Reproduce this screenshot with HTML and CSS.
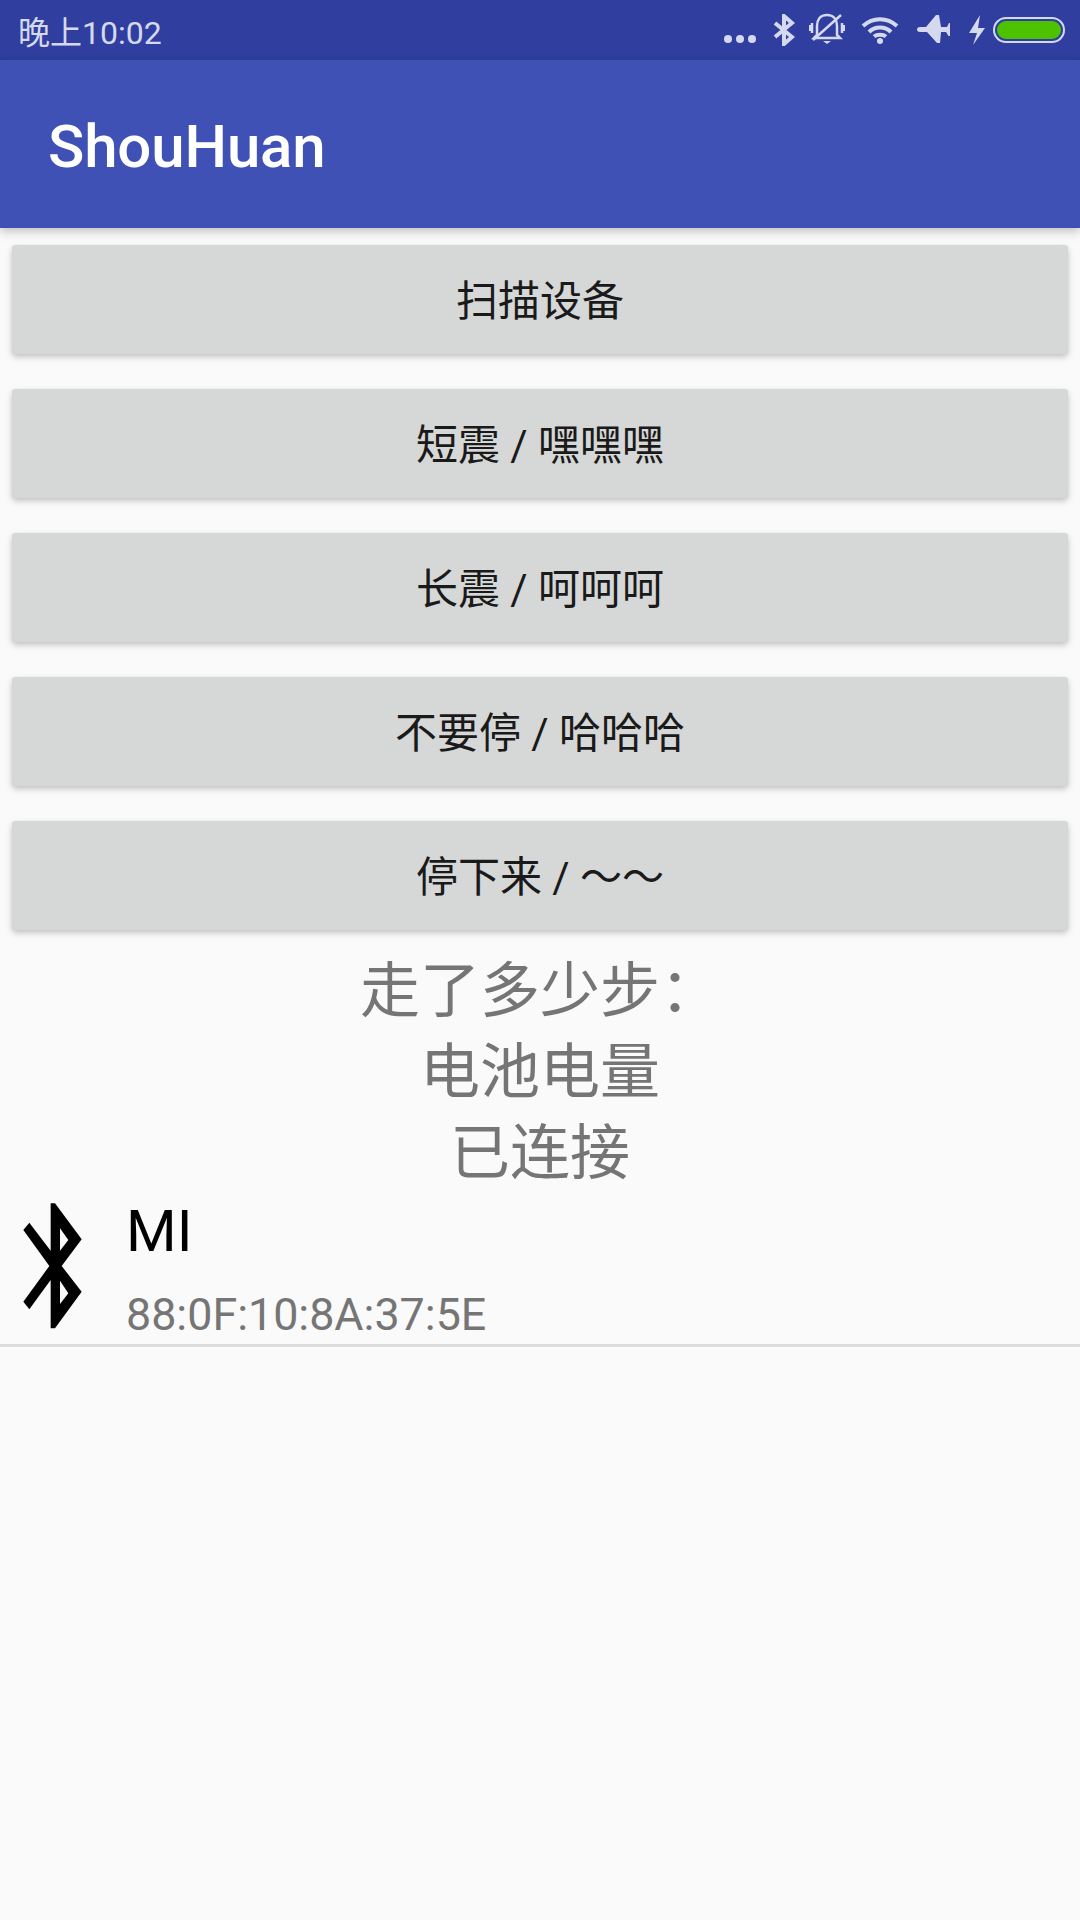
FILE: index.html
```html
<!DOCTYPE html>
<html>
<head>
  <title>ShouHuan</title>
  <link rel="stylesheet" href="styles.css">
</head>
<body>
  <div class="status-bar">
    <span class="time">晚上10:02</span>
    <div class="status-icons">
      <svg class="ic-dots" viewBox="0 0 34 10"><circle cx="5" cy="5" r="4"/><circle cx="17" cy="5" r="4"/><circle cx="29" cy="5" r="4"/></svg>
      <svg class="ic-bt" viewBox="0 0 22 32"><path class="line" d="M2 9 L19 23 L11 30 V2 L19 9 L2 23"/></svg>
      <svg class="ic-bell" viewBox="0 0 36 34">
        <path d="M18 2 C11 2 8 7 8 13 V22 L5 25 H31 L28 22 V13 C28 7 25 2 18 2 Z" class="thin"/>
        <path d="M14 28 H22 L18 31 Z"/>
        <path d="M3 10 V20 M0.8 12 V18 M33 10 V20 M35.2 12 V18" class="thin"/>
        <path d="M4 27 L32 2" class="thin"/>
      </svg>
      <svg class="ic-wifi" viewBox="0 0 38 28">
        <path class="wifi" d="M2 10 C12 1 26 1 36 10 M8 16 C14 10 24 10 30 16 M13 20.500 C16 18 22 18 25 20.500"/>
        <circle cx="19" cy="25" r="3"/>
      </svg>
      <svg class="ic-plane" viewBox="0 0 34 30"><path d="M0 14.500 C0 13 1 12 3 12 H9 L19 0 H22 L24 12 H30 L32 8 H33 V21 H31.500 L29 17 H24 L23 28 H20 L10 17 H3 C1 17 0 16 0 14.500 Z"/></svg>
      <svg class="ic-bolt" viewBox="0 0 17 30"><path d="M12 0 L1 18 H9 L5 30 L17 13 H10 Z"/></svg>
      <div class="battery"><div class="battery-fill"></div></div>
    </div>
  </div>

  <header class="app-bar">
    <h1>ShouHuan</h1>
  </header>

  <div class="content">
    <div class="buttons">
      <button>扫描设备</button>
      <button>短震 / 嘿嘿嘿</button>
      <button>长震 / 呵呵呵</button>
      <button>不要停 / 哈哈哈</button>
      <button>停下来 / ～～</button>
    </div>

    <p class="info">走了多少步：</p>
    <p class="info">电池电量</p>
    <p class="info">已连接</p>

    <div class="device">
      <svg class="device-icon" viewBox="60 60 186 390">
        <path fill-rule="evenodd" d="M152 70 H165 L245 178 L185 258 L245 335 L165 445 H152 V300 L88 388 L70 365 L148 258 L70 150 L88 128 L152 212 Z M180 145 L205 180 L180 212 Z M180 302 L205 340 L180 372 Z"/>
      </svg>
      <div class="device-text">
        <div class="device-name">MI</div>
        <div class="device-addr">88:0F:10:8A:37:5E</div>
      </div>
    </div>
  </div>
</body>
</html>
```

FILE: styles.css
```css
* {
  box-sizing: border-box;
}

body {
  margin: 0;
  width: 1080px;
  height: 1920px;
  overflow: hidden;
  background-color: #fafafa;
  font-family: Roboto, "Noto Sans CJK SC", sans-serif;
}

.status-bar {
  height: 60px;
  background-color: #303f9f;
  color: #d5d9ee;
  display: flex;
  align-items: center;
  justify-content: space-between;
  padding: 0 15px 0 18px;
}

.time {
  font-size: 32px;
}

.status-icons {
  display: flex;
  align-items: center;
}

.status-icons svg {
  fill: #d5d9ee;
  display: block;
}

.ic-dots {
  width: 34px;
  height: 10px;
  margin-top: 18px;
}

.ic-bt {
  width: 22px;
  height: 32px;
  margin-left: 16px;
}

.line {
  fill: none;
  stroke: #d5d9ee;
  stroke-width: 4;
}

.ic-bell {
  width: 36px;
  height: 34px;
  margin-left: 14px;
}

.status-icons .thin {
  fill: none;
  stroke: #d5d9ee;
  stroke-width: 2.500;
}

.ic-wifi {
  width: 38px;
  height: 28px;
  margin-left: 16px;
}

.status-icons .wifi {
  fill: none;
  stroke: #d5d9ee;
  stroke-width: 4;
}

.ic-plane {
  width: 34px;
  height: 30px;
  margin-left: 18px;
}

.ic-bolt {
  width: 17px;
  height: 30px;
  margin-left: 17px;
}

.battery {
  width: 72px;
  height: 26px;
  margin-left: 8px;
  border: 2px solid #d5d9ee;
  border-radius: 13px;
  padding: 2px;
}

.battery-fill {
  height: 100%;
  background-color: #4cc200;
  border-radius: 9px;
}

.app-bar {
  height: 168px;
  background-color: #3f51b5;
  display: flex;
  align-items: center;
  padding: 4px 0 0 48px;
  box-shadow: 0 3px 10px rgba(0, 0, 0, 0.25);
  position: relative;
}

.app-bar h1 {
  margin: 0;
  color: #fff;
  font-size: 60px;
  font-weight: 500;
  letter-spacing: -0.15px;
}

.content {
  padding-top: 17px;
}

.buttons {
  display: flex;
  flex-direction: column;
  gap: 35px;
  padding: 0 12px;
}

.buttons button {
  height: 109px;
  border: none;
  border-radius: 4px;
  padding: 0 0 5px;
  background-color: #d6d7d7;
  color: #1a1a1a;
  font-family: inherit;
  font-size: 42px;
  box-shadow: 0 3px 6px rgba(0, 0, 0, 0.22), 0 0 1px rgba(0, 0, 0, 0.12);
}

.info {
  margin: 0;
  text-align: center;
  color: #757575;
  font-size: 60px;
  line-height: 81px;
}

.buttons + .info {
  margin-top: 21px;
}

.device {
  display: flex;
  align-items: flex-start;
  height: 153px;
  padding-left: 20px;
  border-bottom: 3px solid #dcdcdc;
}

.device-icon {
  width: 62px;
  height: 130px;
  margin-top: 6px;
  fill: #000;
  flex-shrink: 0;
}

.device-text {
  margin-left: 44px;
  padding-top: 2px;
}

.device-name {
  color: #000;
  font-size: 58px;
  line-height: 70px;
}

.device-addr {
  color: #757575;
  font-size: 44.800px;
  line-height: 56px;
  margin-top: 21px;
}
```
